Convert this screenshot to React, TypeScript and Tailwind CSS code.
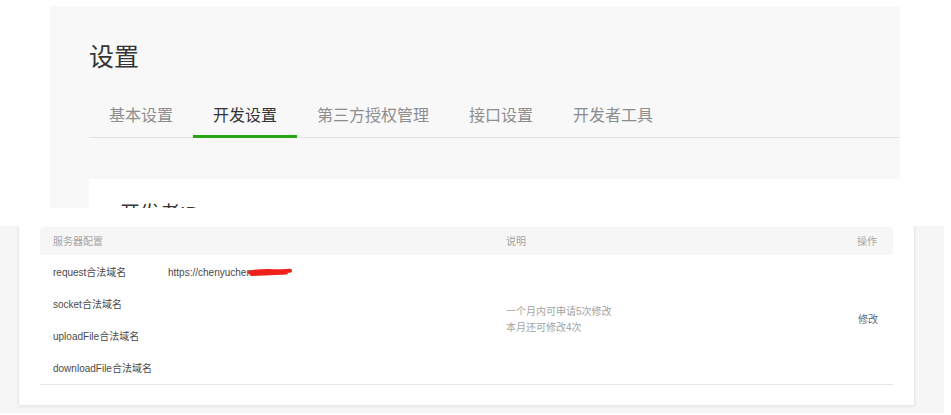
import React from 'react';

const tabs = ['基本设置', '开发设置', '第三方授权管理', '接口设置', '开发者工具'];
const domains = ['request合法域名', 'socket合法域名', 'uploadFile合法域名', 'downloadFile合法域名'];

const font = "font-['Liberation_Sans','Noto_Sans_CJK_SC',sans-serif]";

function Redaction() {
  return (
    <svg width="44" height="10" viewBox="0 0 44 10" className="-ml-[4px] shrink-0">
      <path
        d="M2 5.5 C10 3.5 20 4 30 4.2 C36 4.2 40 3.6 42 3.8 M4 7 C14 6.4 26 6.2 38 5.6"
        stroke="#f0201a"
        strokeWidth="4"
        strokeLinecap="round"
        fill="none"
      />
    </svg>
  );
}

export default function App() {
  return (
    <div className={`w-[951px] h-[415px] bg-white overflow-hidden ${font}`}>
      {/* top shot */}
      <div className="pt-[6px] pl-[50px]">
        <div className="w-[850px] h-[202px] bg-[#f8f8f8] overflow-hidden flex flex-col">
          <h1 className="mt-[39px] ml-[39px] text-[25px] leading-none text-[#353535]">设置</h1>
          <div className="mt-[37px] ml-[39px] flex border-b border-[#e4e4e4]">
            {tabs.map((t, i) => (
              <div
                key={t}
                className={
                  i === 1
                    ? 'px-5 pb-[10px] text-[16px] leading-[18px] text-[#353535] border-b-[3px] border-[#2aa515] -mb-px'
                    : 'px-5 pb-[10px] text-[16px] leading-[18px] text-[#8d8d8d] border-b-[3px] border-transparent -mb-px'
                }
              >
                {t}
              </div>
            ))}
          </div>
          <div className="mt-[41px] ml-[39px] flex-1 bg-white">
            <div className="pt-[25px] pl-[31px] text-[20px] leading-none text-[#353535]">开发者ID</div>
          </div>
        </div>
      </div>

      {/* bottom shot */}
      <div className="mt-[18px] w-[944px] h-[187px] bg-[#f6f6f6] pl-[18px]">
        <div className="w-[897px] h-[180px] bg-white border-x border-b border-[#e9e9e9] shadow-[0_1px_3px_rgba(0,0,0,0.06)] px-[21px] pt-px">
          <div className="h-[28px] bg-[#f6f6f6] rounded-t-[4px] flex items-center text-[10px] text-[#a5a5a5] pl-[13px] pr-[16px]">
            <div className="w-[453px]">服务器配置</div>
            <div className="flex-1">说明</div>
            <div>操作</div>
          </div>
          <div className="flex border-b border-[#e6e6e6] h-[130px]">
            <div className="w-[466px] flex flex-col pt-px">
              {domains.map((d, i) => (
                <div key={d} className="h-[32.5px] flex items-center pl-[13px] text-[10px] text-[#4a4a4a] whitespace-nowrap">
                  <span className="w-[115px] shrink-0">{d}</span>
                  {i === 0 && (
                    <span className="flex items-center">
                      <span>https://chenyuchen</span>
                      <Redaction />
                    </span>
                  )}
                </div>
              ))}
            </div>
            <div className="flex-1 flex flex-col justify-center text-[10px] leading-[16px] text-[#a3a3a3]">
              <div>一个月内可申请5次修改</div>
              <div>本月还可修改4次</div>
            </div>
            <div className="flex items-center pr-[15px] text-[10px] text-[#5d6780]">修改</div>
          </div>
        </div>
      </div>
    </div>
  );
}
